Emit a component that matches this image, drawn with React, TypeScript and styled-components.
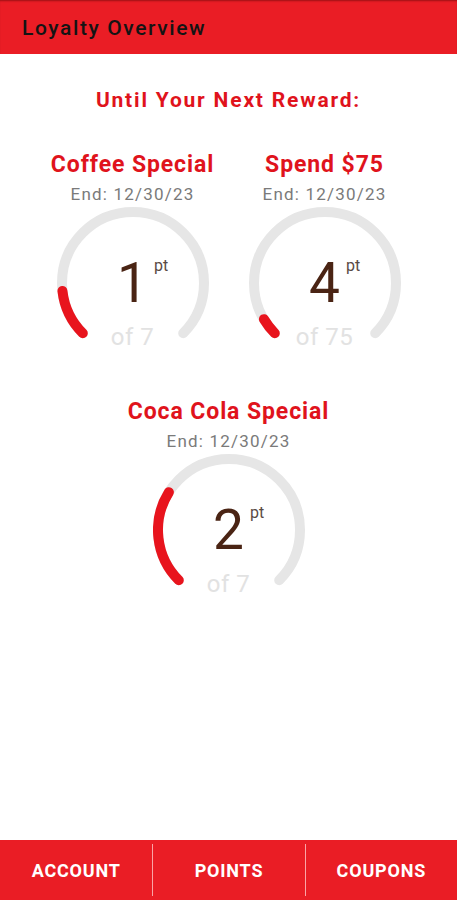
import React from "react";
import styled, { createGlobalStyle } from "styled-components";

const GlobalStyle = createGlobalStyle`
    html, body {
        margin: 0;
        padding: 0;
        background: #ffffff;
        font-family: Roboto, "Liberation Sans", Arial, sans-serif;
    }
`;

const RED = "#ea1d25";
const TITLE_RED = "#e0131c";

const Screen = styled.div`
    min-height: 100vh;
    display: flex;
    flex-direction: column;
`;

const Header = styled.header`
    height: 54px;
    background: ${RED};
    box-shadow: inset 0 2px 2px -1px rgba(60, 0, 0, 0.45);
    display: flex;
    align-items: center;
    padding-left: 22px;
`;

const HeaderTitle = styled.h1`
    margin: 0;
    font-size: 21px;
    font-weight: 500;
    letter-spacing: 1.6px;
    color: #141414;
    padding-top: 2px;
`;

const Main = styled.main`
    flex: 1;
    display: flex;
    flex-direction: column;
    align-items: center;
    padding-top: 34px;
`;

const Heading = styled.h2`
    margin: 0;
    font-size: 21px;
    line-height: 24px;
    font-weight: 700;
    letter-spacing: 1.8px;
    color: ${TITLE_RED};
`;

const Row = styled.div`
    display: flex;
    justify-content: center;
    margin-top: 40px;
`;

const Column = styled.div`
    width: 192px;
    display: flex;
    flex-direction: column;
    align-items: center;
`;

const CardTitle = styled.div`
    font-size: 23px;
    line-height: 26px;
    font-weight: 700;
    letter-spacing: 0.9px;
    color: ${TITLE_RED};
    white-space: nowrap;
`;

const EndDate = styled.div`
    margin-top: 6px;
    font-size: 17px;
    line-height: 20px;
    letter-spacing: 1.2px;
    color: #7a7a7a;
`;

const GaugeBox = styled.div`
    position: relative;
    width: 152px;
    height: 152px;
    margin-top: 3px;
`;

const Center = styled.div`
    position: absolute;
    left: 0;
    right: 0;
    top: 44px;
    display: flex;
    justify-content: center;
`;

const Value = styled.span`
    position: relative;
    font-size: 55px;
    line-height: 64px;
    font-weight: 400;
    color: #4a2414;
`;

const Unit = styled.span`
    position: absolute;
    left: 100%;
    top: 6px;
    margin-left: 6px;
    font-size: 16px;
    line-height: 18px;
    color: #5a4a44;
`;

const Goal = styled.div`
    position: absolute;
    left: 0;
    right: 0;
    top: 116px;
    text-align: center;
    font-size: 24px;
    line-height: 28px;
    letter-spacing: 0.5px;
    color: #e2e2e2;
`;

const BottomNav = styled.nav`
    height: 60px;
    background: ${RED};
    display: grid;
    grid-template-columns: repeat(3, 1fr);
    align-items: center;
`;

const NavItem = styled.div<{ $divider?: boolean }>`
    height: 52px;
    display: flex;
    align-items: center;
    justify-content: center;
    color: #ffffff;
    font-size: 18px;
    font-weight: 700;
    letter-spacing: 0.8px;
    border-left: ${p => (p.$divider ? "1px solid rgba(255, 210, 210, 0.75)" : "none")};
`;

const R = 71;
const C = 76;

const polar = (deg: number) => {
    const a = (deg * Math.PI) / 180;
    return [C + R * Math.cos(a), C + R * Math.sin(a)];
};

const arcPath = (from: number, to: number) => {
    const [x1, y1] = polar(from);
    const [x2, y2] = polar(to);
    const large = to - from > 180 ? 1 : 0;
    return `M ${x1} ${y1} A ${R} ${R} 0 ${large} 1 ${x2} ${y2}`;
};

type GaugeProps = {
    title: string;
    value: number;
    total: number;
};

const Gauge = ({ title, value, total }: GaugeProps) => {
    const end = 135 + (270 * value) / total;
    return (
        <Column>
            <CardTitle>{title}</CardTitle>
            <EndDate>End: 12/30/23</EndDate>
            <GaugeBox>
                <svg width="152" height="152" viewBox="0 0 152 152">
                    <path d={arcPath(135, 405)} fill="none" stroke="#e6e6e6" strokeWidth="10" strokeLinecap="round" />
                    <path d={arcPath(135, end)} fill="none" stroke="#e8141d" strokeWidth="10" strokeLinecap="round" />
                </svg>
                <Center>
                    <Value>
                        {value}
                        <Unit>pt</Unit>
                    </Value>
                </Center>
                <Goal>of {total}</Goal>
            </GaugeBox>
        </Column>
    );
};

export default function App() {
    return (
        <Screen>
            <GlobalStyle />
            <Header>
                <HeaderTitle>Loyalty Overview</HeaderTitle>
            </Header>
            <Main>
                <Heading>Until Your Next Reward:</Heading>
                <Row>
                    <Gauge title="Coffee Special" value={1} total={7} />
                    <Gauge title="Spend $75" value={4} total={75} />
                </Row>
                <Row>
                    <Gauge title="Coca Cola Special" value={2} total={7} />
                </Row>
            </Main>
            <BottomNav>
                <NavItem>ACCOUNT</NavItem>
                <NavItem $divider>POINTS</NavItem>
                <NavItem $divider>COUPONS</NavItem>
            </BottomNav>
        </Screen>
    );
}
